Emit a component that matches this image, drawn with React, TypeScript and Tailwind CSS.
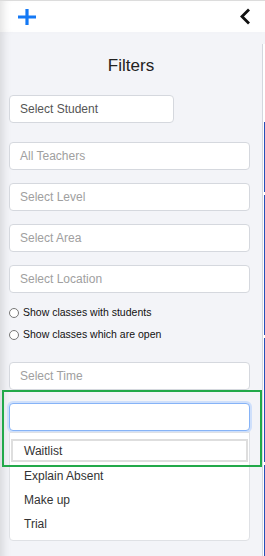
import React from "react";

const FIELDS = [
  { label: "All Teachers", gap: "mt-[19px]" },
  { label: "Select Level", gap: "mt-[13px]" },
  { label: "Select Area", gap: "mt-[13px]" },
  { label: "Select Location", gap: "mt-[13px]" },
];

const RADIOS = ["Show classes with students", "Show classes which are open"];

const OPTIONS = ["Explain Absent", "Make up", "Trial"];

function SelectBox({ label, className = "" }: { label: string; className?: string }) {
  return (
    <div
      className={`flex h-[28px] items-center rounded-[4px] border border-[#d5d8de] bg-white pl-[10px] text-[12px] text-[#a0a0a0] ${className}`}
    >
      {label}
    </div>
  );
}

export default function App() {
  return (
    <div className="relative h-[556px] w-[265px] overflow-hidden bg-[#f3f4f8] font-['Liberation_Sans',Arial,sans-serif]">
      {/* top bar */}
      <div className="flex h-[32px] items-center justify-between border-t border-[#dcdcdc] bg-white pl-[17px] pr-[14px] shadow-[inset_9px_0_8px_-6px_rgba(0,0,0,0.12)]">
        <svg width="20" height="16" viewBox="0 0 20 16">
          <path d="M10 0v16M1 8h18" stroke="#1479f5" strokeWidth="3.2" strokeLinecap="butt" />
        </svg>
        <svg width="12" height="17" viewBox="0 0 12 17">
          <path d="M10 1.5L3 8.5l7 7" fill="none" stroke="#111" strokeWidth="2.8" />
        </svg>
      </div>

      <div className="flex">
        {/* filter panel */}
        <div className="flex w-[262px] flex-col px-[9px] pb-4 pt-[24px] shadow-[inset_9px_0_8px_-6px_rgba(0,0,0,0.12)]">
          <h2 className="text-center text-[17px] leading-[20px] text-[#222]">Filters</h2>

          <div className="mt-[19px] flex h-[28px] w-[165px] items-center rounded-[4px] border border-[#d5d8de] bg-white pl-[10px] text-[12px] text-[#555]">
            Select Student
          </div>

          {FIELDS.map((f) => (
            <SelectBox key={f.label} label={f.label} className={`w-[241px] ${f.gap}`} />
          ))}

          <div className="mt-[9px] flex flex-col">
            {RADIOS.map((r) => (
              <label key={r} className="flex h-[22px] items-center gap-[4px] text-[10.5px] text-[#111]">
                <span className="h-[10px] w-[10px] rounded-full border border-[#777] bg-white" />
                {r}
              </label>
            ))}
          </div>

          <SelectBox label="Select Time" className="mt-[16px] w-[241px]" />

          {/* open dropdown */}
          <div className="mt-[13px] w-[241px]">
            <div className="h-[28px] rounded-[4px] border border-[#86b3f7] bg-white shadow-[0_0_0_2px_#cfe0fb]" />
            <div className="mt-[1px] flex flex-col rounded-b-[4px] border border-[#dfe1e5] bg-white px-[1px] pb-[4px] pt-[6px] text-[12px] text-[#333]">
              <div className="flex h-[23px] items-center border-2 border-[#dedede] pl-[11px]">Waitlist</div>
              <div className="mt-[2px] flex flex-col">
                {OPTIONS.map((o) => (
                  <div key={o} className="flex h-[24px] items-center pl-[13px]">
                    {o}
                  </div>
                ))}
              </div>
            </div>
          </div>
        </div>

        {/* edge of content behind */}
        <div className="flex w-[3px] flex-col pt-[12px]">
          <div className="flex flex-1 border-l border-[#d3d7de] bg-white">
            <div className="ml-auto mt-[78px] flex w-[1px] flex-col gap-[3px]">
              <div className="h-[70px] bg-[#2550b8]" />
              <div className="h-[140px] bg-[#2550b8]" />
              <div className="h-[124px] bg-[#2550b8]" />
              <div className="h-[120px] bg-[#2550b8]" />
            </div>
          </div>
        </div>
      </div>

      {/* highlight annotation */}
      <div className="absolute left-[2px] top-[390px] h-[77px] w-[260px] border-2 border-[#22a94a]" />
    </div>
  );
}
